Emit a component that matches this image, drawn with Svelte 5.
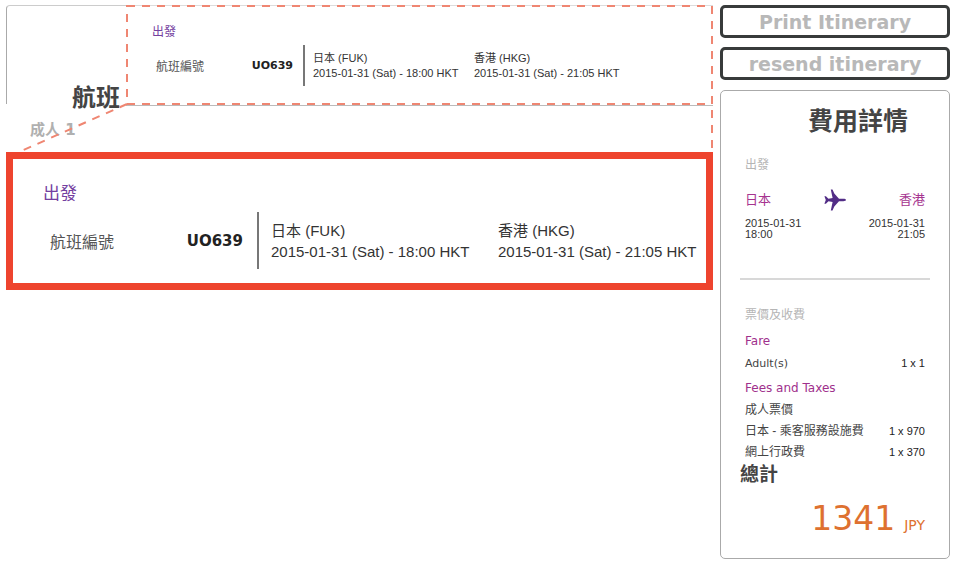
<script>
    const flight = {
        number: "UO639",
        from: { name: "日本", code: "FUK", date: "2015-01-31", day: "Sat", time: "18:00" },
        to: { name: "香港", code: "HKG", date: "2015-01-31", day: "Sat", time: "21:05" }
    };

    const fares = [{ label: "Adult(s)", price: "1 x 1" }];

    const fees = [
        { label: "成人票價", price: "" },
        { label: "日本 - 乘客服務設施費", price: "1 x 970" },
        { label: "網上行政費", price: "1 x 370" }
    ];
</script>

{#snippet stop(place)}
    <div class="stop">
        <div>{place.name} ({place.code})</div>
        <div>{place.date} ({place.day}) - {place.time} HKT</div>
    </div>
{/snippet}

{#snippet leg(size)}
    <div class="leg {size}">
        <h3>出發</h3>
        <div class="legRow">
            <div class="flightNo">
                <span>航班編號</span>
                <b>{flight.number}</b>
            </div>
            {@render stop(flight.from)}
            {@render stop(flight.to)}
        </div>
    </div>
{/snippet}

{#snippet priceTable(rows, name)}
    <table class={name}>
        <tbody>
            {#each rows as row}
                <tr>
                    <td class="item">{row.label}</td>
                    <td class="price">{row.price}</td>
                </tr>
            {/each}
        </tbody>
    </table>
{/snippet}

<div class="page">
    <main>
        <section class="flight">
            <div class="flightLabel">
                <h2>航班</h2>
            </div>
            <div class="source">
                {@render leg("small")}
                <svg class="dashes" aria-hidden="true">
                    <rect x="1" y="1" width="100%" height="98" />
                </svg>
            </div>
        </section>

        <div class="bridge">
            <span>成人 1</span>
            <svg class="slant" viewBox="0 0 121 46" aria-hidden="true">
                <line x1="121" y1="-2" x2="13" y2="46" />
            </svg>
            <svg class="drop" viewBox="0 0 2 46" aria-hidden="true">
                <line x1="1" y1="4" x2="1" y2="46" />
            </svg>
        </div>

        <section class="zoomed">
            {@render leg("large")}
        </section>
    </main>

    <aside>
        <button>Print Itinerary</button>
        <button>resend itinerary</button>

        <section class="cost">
            <h2>費用詳情</h2>
            <div class="part">
                <h4>出發</h4>
                <div class="places">
                    <span>{flight.from.name}</span>
                    <svg width="22" height="22" viewBox="0 0 22 22" aria-hidden="true">
                        <path d="M22 11c0 .7-1.200 1.200-2.700 1.200h-4.300L10.300 17.500 8.500 21.500H6.800L8.600 13 4.500 12.200 1.900 14.700H.4L1.800 11 .4 7.300h1.500L4.500 9.800 8.600 9 6.800.5h1.700L10.300 4.500l4.700 5.300h4.300c1.500 0 2.700.5 2.700 1.200z" />
                    </svg>
                    <span>{flight.to.name}</span>
                </div>
                <div class="dates">
                    <div>{flight.from.date}<br />{flight.from.time}</div>
                    <div class="right">{flight.to.date}<br />{flight.to.time}</div>
                </div>
            </div>
            <hr />
            <div class="part">
                <h4>票價及收費</h4>
                <h5 class="first">Fare</h5>
                {@render priceTable(fares, "fares")}
                <h5>Fees and Taxes</h5>
                {@render priceTable(fees, "fees")}
            </div>
            <h3>總計</h3>
            <p class="total"><span>1341</span><small>JPY</small></p>
        </section>
    </aside>
</div>

<style>
    :global(body) {
        margin: 0;
        background: #fff;
    }

    .page {
        display: grid;
        grid-template-columns: 1fr 230px;
        gap: 7px;
        padding: 5px 4px 6px 6px;
        font-family: "Liberation Sans", "Noto Sans CJK TC", sans-serif;
        font-size: 11px;
        color: #333;
    }

    h2, h3, h4, h5, p {
        margin: 0;
    }

    .flight {
        display: grid;
        grid-template-columns: 120px 1fr;
        height: 101px;
    }

    .flightLabel {
        display: flex;
        align-items: flex-end;
        justify-content: flex-end;
        border-left: 1px solid #aaa;
        border-top: 1px solid #ccc;
        border-top-left-radius: 4px;
        margin-bottom: 2px;
        padding-right: 6px;
    }

    .flightLabel h2 {
        font-size: 24px;
        line-height: 24px;
        margin-bottom: -6px;
        color: #444;
    }

    .source {
        position: relative;
        border-top: 1px solid #ddd;
        border-bottom: 1px solid #bbb;
    }

    .dashes {
        position: absolute;
        top: -1px;
        left: 0;
        width: calc(100% - 2px);
        height: 100px;
        overflow: visible;
    }

    .dashes rect,
    .bridge line {
        fill: none;
        stroke: #ef8672;
        stroke-width: 2;
        stroke-dasharray: 8 7;
    }

    .leg h3 {
        font-weight: normal;
        color: #7440a0;
    }

    .legRow {
        display: grid;
    }

    .flightNo {
        display: flex;
        align-items: center;
        justify-content: space-between;
        border-right: 2px solid #777;
        color: #555;
    }

    .flightNo b {
        font-family: "DejaVu Sans", sans-serif;
        color: #222;
    }

    .stop {
        align-self: center;
        white-space: nowrap;
    }

    .small {
        padding: 18px 0 0 26px;
    }

    .small h3 {
        font-size: 12px;
        line-height: 16px;
        margin-bottom: 5px;
    }

    .small .legRow {
        grid-template-columns: 149px 161px auto;
        height: 41px;
        padding-left: 4px;
    }

    .small .flightNo {
        font-size: 12px;
        padding-right: 10px;
    }

    .small b {
        font-size: 11px;
    }

    .small .stop {
        font-size: 11px;
        line-height: 15px;
        padding-left: 8px;
    }

    .bridge {
        position: relative;
        height: 46px;
    }

    .bridge span {
        display: block;
        padding: 13px 0 0 24px;
        font: bold 15px/22px "DejaVu Sans", "Noto Sans CJK TC", sans-serif;
        color: #b0b0b0;
    }

    .slant,
    .drop {
        position: absolute;
        top: 0;
        height: 46px;
        overflow: visible;
    }

    .slant {
        left: 0;
        width: 121px;
    }

    .drop {
        right: 0;
        width: 2px;
    }

    .zoomed {
        border: 7px solid #ee442e;
    }

    .large {
        padding: 24px 0 14px 30px;
    }

    .large h3 {
        font-size: 17px;
        line-height: 22px;
        margin-bottom: 7px;
    }

    .large .legRow {
        grid-template-columns: 209px 227px auto;
        height: 57px;
        padding-left: 7px;
    }

    .large .flightNo {
        font-size: 16px;
        padding-right: 14px;
    }

    .large b {
        font-size: 15px;
    }

    .large .stop {
        font-size: 15px;
        line-height: 21px;
        padding-left: 12px;
    }

    aside {
        display: flex;
        flex-direction: column;
    }

    button {
        height: 33px;
        margin-bottom: 9px;
        padding: 0;
        border: 3px solid #383b3b;
        border-radius: 5px;
        background: #fff;
        font: bold 19px/24px "DejaVu Sans", sans-serif;
        color: #b8b8b8;
        cursor: pointer;
    }

    .cost {
        border: 1px solid #aaa;
        border-radius: 5px;
        padding: 13px 19px 19px;
        margin-top: 1px;
    }

    .cost h2 {
        font-size: 25px;
        line-height: 34px;
        padding-right: 22px;
        text-align: right;
        color: #444;
    }

    .part {
        padding: 0 5px;
    }

    h4 {
        font-size: 12px;
        font-weight: normal;
        line-height: 18px;
        color: #b5b5b5;
        padding-top: 18px;
    }

    .places {
        display: flex;
        align-items: center;
        justify-content: space-between;
        margin-top: 16px;
        height: 20px;
        font-size: 13px;
        line-height: 18px;
        color: #a6348f;
    }

    .places svg {
        fill: #522d86;
    }

    .dates {
        display: flex;
        justify-content: space-between;
        margin-top: 8px;
        line-height: 11px;
    }

    .right {
        text-align: right;
    }

    hr {
        margin: 38px 0 8px;
        border: 0;
        border-top: 2px solid #d8d8d8;
    }

    h5 {
        font: 12px/20px "DejaVu Sans", sans-serif;
        color: #a0308c;
        margin: 4px 0 2px;
    }

    .first {
        margin-top: 7px;
    }

    table {
        width: 100%;
        border-collapse: collapse;
        color: #444;
    }

    td {
        height: 21px;
        padding: 0;
        font: 12px/21px "Liberation Sans", "Noto Sans CJK TC", sans-serif;
        white-space: nowrap;
    }

    .fares .item {
        font: 11px/21px "DejaVu Sans", sans-serif;
    }

    td.price {
        font-size: 11px;
        text-align: right;
        color: #222;
    }

    .cost h3 {
        font-size: 19px;
        line-height: 24px;
        color: #444;
    }

    .total {
        display: flex;
        align-items: baseline;
        justify-content: flex-end;
        gap: 9px;
        margin-top: 12px;
        padding-right: 5px;
        font: 33px/40px "DejaVu Sans", sans-serif;
        color: #de7130;
    }

    .total small {
        font-size: 14px;
        line-height: 18px;
    }
</style>
